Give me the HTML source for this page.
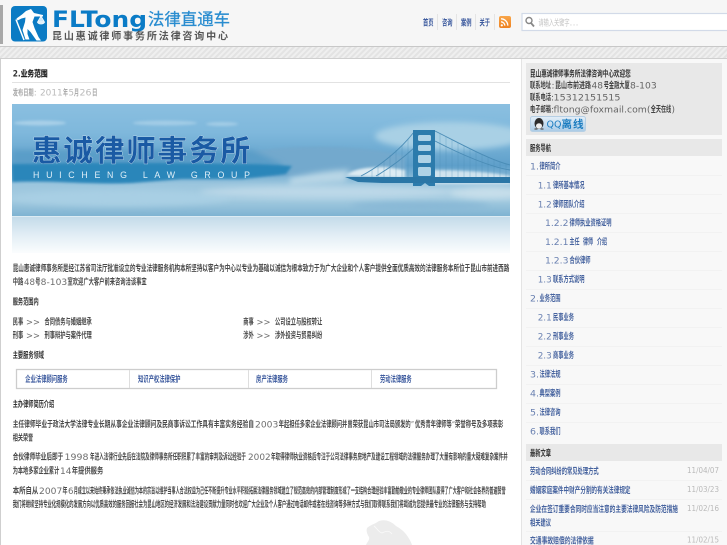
<!DOCTYPE html>
<html lang="zh-CN">
<head>
<meta charset="utf-8">
<title>FLTong 法律直通车</title>
<style>
html,body{margin:0;padding:0;background:#fff;width:727px;height:545px;overflow:hidden}
svg{display:block;position:absolute;left:0;top:0}
text{white-space:pre}
.c{font-family:"Liberation Sans","Noto Sans CJK SC",sans-serif;font-size:8.8px;font-weight:700}
.l{font-family:"DejaVu Sans","Liberation Sans",sans-serif;font-size:9px;opacity:.8}
.b{font-weight:700;opacity:1}
.r{font-weight:400}
#all{filter:blur(.3px)}
</style>
</head>
<body>
<svg id="all" width="727" height="545" viewBox="0 0 727 545" xmlns="http://www.w3.org/2000/svg">
<defs>
<pattern id="hatch" width="4" height="4" patternUnits="userSpaceOnUse" patternTransform="rotate(45)">
<rect width="4" height="4" fill="#efefef"/><rect width="2" height="4" fill="#e3e3e3"/>
</pattern>
<linearGradient id="sky" x1="0" y1="0" x2="0" y2="1">
<stop offset="0" stop-color="#8abfe0"/><stop offset=".25" stop-color="#7fb8dc"/><stop offset=".42" stop-color="#6eabd2"/><stop offset=".55" stop-color="#5e9fca"/><stop offset=".72" stop-color="#9cc6de"/><stop offset=".85" stop-color="#a4cbe0"/><stop offset="1" stop-color="#7fb3d2"/>
</linearGradient>
<linearGradient id="refl" x1="0" y1="0" x2="0" y2="1">
<stop offset="0" stop-color="#c4dcea"/><stop offset=".5" stop-color="#e2eef5"/><stop offset="1" stop-color="#fbfdfe"/>
</linearGradient>
<linearGradient id="qq" x1="0" y1="0" x2="0" y2="1">
<stop offset="0" stop-color="#e4eff8"/><stop offset="1" stop-color="#a9cbe6"/>
</linearGradient>
<linearGradient id="rss" x1="0" y1="0" x2="0" y2="1">
<stop offset="0" stop-color="#f8a64a"/><stop offset="1" stop-color="#ee8220"/>
</linearGradient>
<filter id="f3" x="-20%" y="-50%" width="140%" height="200%"><feGaussianBlur stdDeviation="3"/></filter>
<filter id="f1" x="-20%" y="-50%" width="140%" height="200%"><feGaussianBlur stdDeviation="1.2"/></filter>
<clipPath id="bc"><rect x="12" y="104" width="498" height="112"/></clipPath>
</defs>

<!-- page frame -->
<rect width="727" height="545" fill="#fff"/>
<rect width="727" height="46" fill="#f6f6f6"/>
<rect x="0" y="5" width="3" height="39" fill="#a8a8a8"/>
<rect y="46" width="727" height="1" fill="#c8c8c8"/>
<rect y="47" width="727" height="11" fill="url(#hatch)"/>
<rect y="58" width="727" height="1" fill="#cfcfcf"/>
<rect x="0" y="58" width="1" height="487" fill="#cfcfcf"/>
<rect x="521" y="59" width="206" height="486" fill="#f8f8f8"/>
<rect x="521" y="59" width="1" height="486" fill="#e4e4e4"/>

<!-- logo -->
<rect x="11" y="6" width="36" height="35.500" rx="4" fill="#0b7bc4"/>
<path d="M26 11L31 9 34 13 43 15 43 16.500 34.500 16.500 32.500 22 34.500 28 38.500 37 41 40.500 36.500 40.500 30.500 32 27.500 29 27.500 34 29.500 39.500 25.500 39.500 22.500 30 25 22 25.500 17.500 21.500 18.500 17.500 20.500 16.500 18.500 22 14.500Z" fill="#fff"/>
<path d="M16 19.500L24 40" stroke="#fff" stroke-width="1.500" fill="none"/>
<path d="M37.500 22h7l-3.500-6zM37.500 22a3.500 2 0 0 0 7 0" fill="#cfe6f5" stroke="#fff" stroke-width=".7"/>
<text x="52" y="27" class="l b" style="font-size:22px" fill="#0a7bc6" textLength="95" lengthAdjust="spacingAndGlyphs">FLTong</text>
<text x="148" y="25" class="c r" style="font-size:16.400px" fill="#2a8dd0" stroke="#2a8dd0" stroke-width=".3" textLength="82" lengthAdjust="spacingAndGlyphs">法律直通车</text>
<text x="52" y="39.500" class="c" style="font-size:10px" fill="#555" textLength="176">昆山惠诚律师事务所法律咨询中心</text>

<!-- nav -->
<g fill="#3c5a9e">
<text x="423" y="25.500" class="c" textLength="10.500" lengthAdjust="spacingAndGlyphs">首页</text>
<text x="442" y="25.500" class="c" textLength="10.500" lengthAdjust="spacingAndGlyphs">咨询</text>
<text x="461" y="25.500" class="c" textLength="10.500" lengthAdjust="spacingAndGlyphs">案例</text>
<text x="479.500" y="25.500" class="c" textLength="10.500" lengthAdjust="spacingAndGlyphs">关于</text>
</g>
<g fill="#e4e4e4">
<rect x="437" y="14" width="1" height="16"/><rect x="456" y="14" width="1" height="16"/><rect x="475" y="14" width="1" height="16"/><rect x="494" y="14" width="1" height="16"/>
</g>
<rect x="499" y="16" width="12" height="12" rx="2" fill="url(#rss)"/>
<circle cx="501.800" cy="25.300" r="1.100" fill="#fff"/>
<path d="M501 21.800a3.800 3.800 0 0 1 3.800 3.800M501 18.800a6.800 6.800 0 0 1 6.800 6.800" fill="none" stroke="#fff" stroke-width="1.300"/>
<rect x="522" y="13.500" width="210" height="17" fill="#fff" stroke="#d2dae8" stroke-width="1.200"/>
<circle cx="529" cy="20.500" r="3" fill="none" stroke="#888" stroke-width="1.400"/>
<path d="M531 23l3 3.500" stroke="#888" stroke-width="1.800"/>
<text x="538.500" y="25.500" class="c r" fill="#c4c4c4" textLength="31" lengthAdjust="spacingAndGlyphs">请输入关键字</text>
<text x="569.500" y="25.500" class="l" fill="#bdbdbd" textLength="9">...</text>

<!-- title -->
<text x="12.700" y="76.500" class="l b" fill="#333" textLength="8" lengthAdjust="spacingAndGlyphs">2.</text>
<text x="20.700" y="76.500" class="c" fill="#222" stroke="#222" stroke-width=".2" textLength="27" lengthAdjust="spacingAndGlyphs">业务范围</text>
<rect x="12" y="82" width="498" height="1" fill="#e2e2e2"/>
<g fill="#aaa">
<text x="12.700" y="95.500" class="c" textLength="21" lengthAdjust="spacingAndGlyphs">发布日期</text>
<text x="33.700" y="95.500" class="l" textLength="3">:</text>
<text x="40" y="95.500" class="l" textLength="22.700" lengthAdjust="spacingAndGlyphs">2011</text>
<text x="63" y="95.500" class="c" textLength="5" lengthAdjust="spacingAndGlyphs">年</text>
<text x="68.500" y="95.500" class="l" textLength="5.500" lengthAdjust="spacingAndGlyphs">5</text>
<text x="74" y="95.500" class="c" textLength="5" lengthAdjust="spacingAndGlyphs">月</text>
<text x="79.500" y="95.500" class="l" textLength="12" lengthAdjust="spacingAndGlyphs">26</text>
<text x="92" y="95.500" class="c" textLength="5.500" lengthAdjust="spacingAndGlyphs">日</text>
</g>

<!-- banner -->
<g clip-path="url(#bc)">
<rect x="12" y="104" width="498" height="112" fill="url(#sky)"/>
<ellipse cx="40" cy="123" rx="26" ry="2.500" fill="#a9d0e8" filter="url(#f1)"/>
<ellipse cx="165" cy="123" rx="32" ry="2.500" fill="#a2cce6" filter="url(#f1)"/>
<ellipse cx="222" cy="124" rx="16" ry="2" fill="#a2cce6" filter="url(#f1)"/>
<ellipse cx="450" cy="136" rx="75" ry="14" fill="#a9d0e5" filter="url(#f3)"/>
<path d="M250 152c30-5 60-6 85-5 25 1 45 3 70 9v20H250z" fill="#73a9cd" filter="url(#f1)"/>
<path d="M12 150h240l30 14v10H12z" fill="#5a9dc8" filter="url(#f3)"/>
<path d="M12 164c30 0 90-2 150-1 50 1 90 0 130 3l-6 8-44 5-60 0-50 4c-40 2-80-3-120-1z" fill="#2c86ba" filter="url(#f1)"/>
<path d="M345 176c5-6 20-9 40-9l20 3v8z" fill="#dcebf3" filter="url(#f1)"/>
<path d="M290 178c25-5 40-8 60-8l-5 12-55 4z" fill="#b8d6e6" filter="url(#f3)"/>
<path d="M430 170c30 0 60 2 80 6v8h-80z" fill="#cfe3ee" filter="url(#f1)"/>
<ellipse cx="120" cy="198" rx="110" ry="8" fill="#a8cfe4" filter="url(#f3)"/>
<ellipse cx="330" cy="192" rx="130" ry="6" fill="#bcd8e8" filter="url(#f3)"/>
<ellipse cx="490" cy="193" rx="40" ry="6" fill="#c6deea" filter="url(#f3)"/>
<ellipse cx="420" cy="206" rx="70" ry="4" fill="#88b8d6" filter="url(#f3)"/>

<!-- bridge -->
<g fill="none" stroke="#4a8cb6">
<path d="M414 132C400 150 380 166 361 176" stroke-width=".9"/>
<path d="M414 148C403 158 390 168 376 176" stroke-width=".9"/>
<path d="M435 131C465 146 490 160 510 165" stroke-width=".9"/>
<path d="M435 141C460 154 490 167 510 170" stroke-width=".9"/>
<path d="M372 177V170M378 177V166M384 177V161M390 177V155M396 177V150M402 177V145M408 177V139M440 177V134M446 177V137M452 177V140M458 177V143M464 177V146M470 177V149M476 177V152M482 177V155M488 177V157M494 177V160M500 177V162M506 177V164" stroke-width=".5" opacity=".6"/>
</g>
<path d="M413 130h22v56h-6l-4-3-4 3h-8z" fill="#2c7bac"/>
<g fill="#aed2e6">
<rect x="418" y="135" width="13" height="6" rx="1.500"/>
<rect x="418" y="145" width="13" height="6" rx="1.500"/>
<rect x="418" y="155" width="13" height="8" rx="1.500"/>
<rect x="418" y="167" width="13" height="9" rx="1.500"/>
</g>
<path d="M345 177l65 0h100v6H382l-24-1z" fill="#2a76a6"/>

<!-- banner text -->
<text x="32" y="161" class="c" style="font-size:29.500px" fill="#1a5aa4" stroke="#dbeaf4" stroke-width=".6" paint-order="stroke" textLength="218" lengthAdjust="spacing">惠诚律师事务所</text>
<text x="33" y="178" style="font-family:'Liberation Sans',sans-serif;font-size:8.800px" fill="#e0eff8" textLength="217" lengthAdjust="spacing">HUICHENG LAW GROUP</text>
</g>
<rect x="12" y="216" width="498" height="1" fill="#dcebf3"/>
<rect x="12" y="217" width="498" height="36" fill="url(#refl)"/>

<!-- body text -->
<g fill="#4a4a4a">
<text x="12.700" y="271" class="c" textLength="496.600" lengthAdjust="spacingAndGlyphs">昆山惠诚律师事务所是经江苏省司法厅批准设立的专业法律服务机构本所坚持以客户为中心以专业为基础以诚信为根本致力于为广大企业和个人客户提供全面优质高效的法律服务本所位于昆山市前进西路</text>
<text x="12.700" y="284.600" class="c" textLength="10.600" lengthAdjust="spacingAndGlyphs">中路</text>
<text x="24" y="285" class="l" textLength="11" lengthAdjust="spacingAndGlyphs">48</text>
<text x="35.200" y="284.600" class="c" textLength="5.200" lengthAdjust="spacingAndGlyphs">号</text>
<text x="40.700" y="285" class="l" textLength="26.500" lengthAdjust="spacingAndGlyphs">8-103</text>
<text x="67.500" y="284.600" class="c" textLength="79.200" lengthAdjust="spacingAndGlyphs">室欢迎广大客户前来咨询洽谈事宜</text>

<text x="12.700" y="304.700" class="c" fill="#333" textLength="26" lengthAdjust="spacingAndGlyphs">服务范围内</text>

<text x="12.700" y="324.700" class="c" textLength="10.500" lengthAdjust="spacingAndGlyphs">民事</text>
<text x="26" y="325" class="l" textLength="14" lengthAdjust="spacingAndGlyphs">&gt;&gt;</text>
<text x="44.500" y="324.700" class="c" textLength="47.200" lengthAdjust="spacingAndGlyphs">合同债务与婚姻继承</text>
<text x="12.700" y="338" class="c" textLength="10.500" lengthAdjust="spacingAndGlyphs">刑事</text>
<text x="26" y="338.300" class="l" textLength="14" lengthAdjust="spacingAndGlyphs">&gt;&gt;</text>
<text x="44.500" y="338" class="c" textLength="47.200" lengthAdjust="spacingAndGlyphs">刑事辩护与案件代理</text>
<text x="243.300" y="324.700" class="c" textLength="10.500" lengthAdjust="spacingAndGlyphs">商事</text>
<text x="256.500" y="325" class="l" textLength="14" lengthAdjust="spacingAndGlyphs">&gt;&gt;</text>
<text x="275" y="324.700" class="c" textLength="47.200" lengthAdjust="spacingAndGlyphs">公司设立与股权转让</text>
<text x="243.300" y="338" class="c" textLength="10.500" lengthAdjust="spacingAndGlyphs">涉外</text>
<text x="256.500" y="338.300" class="l" textLength="14" lengthAdjust="spacingAndGlyphs">&gt;&gt;</text>
<text x="275" y="338" class="c" textLength="47.200" lengthAdjust="spacingAndGlyphs">涉外投资与贸易纠纷</text>

<text x="12.700" y="358" class="c" fill="#333" textLength="31.300" lengthAdjust="spacingAndGlyphs">主要服务领域</text>
</g>

<!-- table -->
<rect x="16.500" y="369.500" width="480" height="19" fill="#fff" stroke="#cdcdcd" stroke-width="1.300"/>
<g fill="#dedede"><rect x="129" y="370" width="1" height="18"/><rect x="248" y="370" width="1" height="18"/><rect x="371" y="370" width="1" height="18"/></g>
<g fill="#3c5a9e">
<text x="25.300" y="382" class="c" textLength="42.400" lengthAdjust="spacingAndGlyphs">企业法律顾问服务</text>
<text x="138" y="382" class="c" textLength="42.400" lengthAdjust="spacingAndGlyphs">知识产权法律保护</text>
<text x="256" y="382" class="c" textLength="32" lengthAdjust="spacingAndGlyphs">房产法律服务</text>
<text x="380" y="382" class="c" textLength="31.700" lengthAdjust="spacingAndGlyphs">劳动法律服务</text>
</g>

<g fill="#4a4a4a">
<text x="12.700" y="407" class="c" fill="#333" textLength="41.500" lengthAdjust="spacingAndGlyphs">主办律师简历介绍</text>

<text x="12.700" y="427" class="c" textLength="241.300" lengthAdjust="spacingAndGlyphs">主任律师毕业于政法大学法律专业长期从事企业法律顾问及民商事诉讼工作具有丰富实务经验自</text>
<text x="255" y="427.300" class="l" textLength="23.300" lengthAdjust="spacingAndGlyphs">2003</text>
<text x="278.700" y="427" class="c" textLength="132" lengthAdjust="spacingAndGlyphs">年起担任多家企业法律顾问并曾荣获昆山市司法局颁发的</text>
<text x="411" y="427.300" class="l" textLength="3" lengthAdjust="spacingAndGlyphs">”</text>
<text x="415" y="427" class="c" textLength="36.700" lengthAdjust="spacingAndGlyphs">优秀青年律师等</text>
<text x="452" y="427.300" class="l" textLength="3" lengthAdjust="spacingAndGlyphs">“</text>
<text x="455" y="427" class="c" textLength="48.300" lengthAdjust="spacingAndGlyphs">荣誉称号及多项表彰</text>
<text x="12.700" y="440.300" class="c" textLength="20.500" lengthAdjust="spacingAndGlyphs">相关荣誉</text>

<text x="12.700" y="459.700" class="c" textLength="50.600" lengthAdjust="spacingAndGlyphs">合伙律师毕业后即于</text>
<text x="64.500" y="460" class="l" textLength="24" lengthAdjust="spacingAndGlyphs">1998</text>
<text x="90" y="459.700" class="c" textLength="156" lengthAdjust="spacingAndGlyphs">年进入法律行业先后在法院及律师事务所任职积累了丰富的审判及诉讼经验于</text>
<text x="248" y="460" class="l" textLength="22.700" lengthAdjust="spacingAndGlyphs">2002</text>
<text x="271" y="459.700" class="c" textLength="236.700" lengthAdjust="spacingAndGlyphs">年取得律师执业资格后专注于公司法律事务房地产及建设工程领域的法律服务办理了大量有影响的重大疑难复杂案件并</text>
<text x="12.700" y="473.700" class="c" textLength="46.600" lengthAdjust="spacingAndGlyphs">为本地多家企业累计</text>
<text x="60" y="474" class="l" textLength="11.500" lengthAdjust="spacingAndGlyphs">14</text>
<text x="71.700" y="473.700" class="c" textLength="31.600" lengthAdjust="spacingAndGlyphs">年提供服务</text>

<text x="12.700" y="493.700" class="c" textLength="25.600" lengthAdjust="spacingAndGlyphs">本所自从</text>
<text x="39" y="494" class="l" textLength="23.300" lengthAdjust="spacingAndGlyphs">2007</text>
<text x="62.500" y="493.700" class="c" textLength="5" lengthAdjust="spacingAndGlyphs">年</text>
<text x="68" y="494" class="l" textLength="5.500" lengthAdjust="spacingAndGlyphs">6</text>
<text x="73.700" y="493.700" class="c" textLength="432" lengthAdjust="spacingAndGlyphs">月成立以来始终秉承依法执业诚信为本的宗旨以维护当事人合法权益为己任不断提升专业水平积极拓展法律服务领域建立了规范高效的内部管理制度形成了一支结构合理经验丰富勤勉敬业的专业律师团队赢得了广大客户和社会各界的普遍赞誉</text>
<text x="12.700" y="507" class="c" textLength="473.300" lengthAdjust="spacingAndGlyphs">我们将继续坚持专业化规模化的发展方向以优质高效的服务回报社会为昆山地区的经济发展和法治建设贡献力量同时也欢迎广大企业及个人客户通过电话邮件或者在线咨询等多种方式与我们取得联系我们将竭诚为您提供最专业的法律服务与支持帮助</text>
</g>

<!-- map watermark -->
<path d="M367 528c3-3 8-4 12-7 6-2 12 0 17 5 5 3 9 6 12 11 2 3 3 5 4 8h-46c1-3 4-5 3-8-2-3-3-6-2-9z" fill="#ececec"/>
<path d="M374 526c3 2 4 6 8 7 4-2 7-3 10 1" fill="none" stroke="#fafafa" stroke-width=".8"/>

<!-- sidebar info -->
<rect x="526" y="63" width="196" height="72" fill="#e8e8e8"/>
<g fill="#444">
<text x="530" y="76.300" class="c" fill="#333" textLength="100.700" lengthAdjust="spacingAndGlyphs">昆山惠诚律师事务所法律咨询中心欢迎您</text>
<text x="530" y="88" class="c" textLength="21" lengthAdjust="spacingAndGlyphs">联系地址</text>
<text x="551.500" y="88.300" class="l" textLength="3">:</text>
<text x="555" y="88" class="c" textLength="36" lengthAdjust="spacingAndGlyphs">昆山市前进路</text>
<text x="591.500" y="88.300" class="l" textLength="11.500" lengthAdjust="spacingAndGlyphs">48</text>
<text x="603.700" y="88" class="c" textLength="26" lengthAdjust="spacingAndGlyphs">号金融大厦</text>
<text x="630" y="88.300" class="l" textLength="26.700" lengthAdjust="spacingAndGlyphs">8-103</text>
<text x="530" y="100" class="c" textLength="21" lengthAdjust="spacingAndGlyphs">联系电话</text>
<text x="551" y="100.300" class="l" textLength="3">:</text>
<text x="553.500" y="100.300" class="l" textLength="67" lengthAdjust="spacingAndGlyphs">15312151515</text>
<text x="530" y="112" class="c" textLength="21" lengthAdjust="spacingAndGlyphs">电子邮箱</text>
<text x="551" y="112.300" class="l" textLength="3">:</text>
<text x="553.500" y="112.300" class="l" textLength="97" lengthAdjust="spacingAndGlyphs">fltong@foxmail.com(</text>
<text x="650.700" y="112" class="c" textLength="20.500" lengthAdjust="spacingAndGlyphs">全天在线</text>
<text x="671.500" y="112.300" class="l" textLength="3.500" lengthAdjust="spacingAndGlyphs">)</text>
</g>
<rect x="530.500" y="116.500" width="55" height="15" rx="2" fill="url(#qq)" stroke="#b6cfe4"/>
<ellipse cx="539" cy="123.500" rx="4.500" ry="5.500" fill="#2c2c2c"/>
<ellipse cx="539" cy="126" rx="3" ry="2.800" fill="#eee"/>
<path d="M534.500 129h3M540.500 129h3" stroke="#555" stroke-width="1.200"/>
<text x="546.500" y="127.500" class="l b" style="font-size:10px;font-weight:400" fill="#1a7cc0" textLength="15" lengthAdjust="spacingAndGlyphs">QQ</text>
<text x="561.500" y="127.500" class="c" style="font-size:10.500px" fill="#1a7cc0" textLength="22">离线</text>

<!-- sidebar headings -->
<rect x="526" y="139" width="196" height="17" fill="#e8e8e8"/>
<text x="530" y="151" class="c" fill="#333" textLength="21" lengthAdjust="spacingAndGlyphs">服务导航</text>
<rect x="526" y="444" width="196" height="17" fill="#e8e8e8"/>
<text x="530" y="456" class="c" fill="#333" textLength="21" lengthAdjust="spacingAndGlyphs">最新文章</text>

<!-- nav separators -->
<g fill="#f2f2f2">
<rect x="526" y="175" width="196" height="1"/><rect x="526" y="194" width="196" height="1"/><rect x="526" y="213" width="196" height="1"/><rect x="526" y="232" width="196" height="1"/><rect x="526" y="251" width="196" height="1"/><rect x="526" y="270" width="196" height="1"/><rect x="526" y="289" width="196" height="1"/><rect x="526" y="308" width="196" height="1"/><rect x="526" y="327" width="196" height="1"/><rect x="526" y="346" width="196" height="1"/><rect x="526" y="365" width="196" height="1"/><rect x="526" y="384" width="196" height="1"/><rect x="526" y="403" width="196" height="1"/><rect x="526" y="422" width="196" height="1"/><rect x="526" y="480" width="196" height="1"/><rect x="526" y="499" width="196" height="1"/><rect x="526" y="531" width="196" height="1"/>
</g>

<!-- tree -->
<g fill="#46639f">
<text x="530" y="169.300" class="l" textLength="9" lengthAdjust="spacingAndGlyphs">1.</text><text x="539.500" y="169" class="c" textLength="21" lengthAdjust="spacingAndGlyphs">律所简介</text>
<text x="537.700" y="188.300" class="l" textLength="14" lengthAdjust="spacingAndGlyphs">1.1</text><text x="553" y="188" class="c" textLength="31.500" lengthAdjust="spacingAndGlyphs">律所基本情况</text>
<text x="537.700" y="207.300" class="l" textLength="14" lengthAdjust="spacingAndGlyphs">1.2</text><text x="553" y="207" class="c" textLength="31.500" lengthAdjust="spacingAndGlyphs">律师团队介绍</text>
<text x="545" y="226" class="l" textLength="23.500" lengthAdjust="spacingAndGlyphs">1.2.2</text><text x="569.500" y="225.700" class="c" textLength="42" lengthAdjust="spacingAndGlyphs">律师执业资格证明</text>
<text x="545" y="244.800" class="l" textLength="23.500" lengthAdjust="spacingAndGlyphs">1.2.1</text><text x="569.500" y="244.500" class="c" textLength="10" lengthAdjust="spacingAndGlyphs">主任</text><text x="583" y="244.500" class="c" textLength="10" lengthAdjust="spacingAndGlyphs">律师</text><text x="597" y="244.500" class="c" textLength="10" lengthAdjust="spacingAndGlyphs">介绍</text>
<text x="545" y="263.300" class="l" textLength="23.500" lengthAdjust="spacingAndGlyphs">1.2.3</text><text x="569.500" y="263" class="c" textLength="21" lengthAdjust="spacingAndGlyphs">合伙律师</text>
<text x="537.700" y="282.300" class="l" textLength="14" lengthAdjust="spacingAndGlyphs">1.3</text><text x="553" y="282" class="c" textLength="31.500" lengthAdjust="spacingAndGlyphs">联系方式说明</text>
<text x="530" y="301.300" class="l" textLength="9" lengthAdjust="spacingAndGlyphs">2.</text><text x="539.500" y="301" class="c" textLength="21" lengthAdjust="spacingAndGlyphs">业务范围</text>
<text x="537.700" y="320.300" class="l" textLength="14" lengthAdjust="spacingAndGlyphs">2.1</text><text x="553" y="320" class="c" textLength="21" lengthAdjust="spacingAndGlyphs">民事业务</text>
<text x="537.700" y="339.300" class="l" textLength="14" lengthAdjust="spacingAndGlyphs">2.2</text><text x="553" y="339" class="c" textLength="21" lengthAdjust="spacingAndGlyphs">刑事业务</text>
<text x="537.700" y="358.300" class="l" textLength="14" lengthAdjust="spacingAndGlyphs">2.3</text><text x="553" y="358" class="c" textLength="21" lengthAdjust="spacingAndGlyphs">商事业务</text>
<text x="530" y="377.300" class="l" textLength="9" lengthAdjust="spacingAndGlyphs">3.</text><text x="539.500" y="377" class="c" textLength="21" lengthAdjust="spacingAndGlyphs">法律法规</text>
<text x="530" y="396.300" class="l" textLength="9" lengthAdjust="spacingAndGlyphs">4.</text><text x="539.500" y="396" class="c" textLength="21" lengthAdjust="spacingAndGlyphs">典型案例</text>
<text x="530" y="415.300" class="l" textLength="9" lengthAdjust="spacingAndGlyphs">5.</text><text x="539.500" y="415" class="c" textLength="21" lengthAdjust="spacingAndGlyphs">法律咨询</text>
<text x="530" y="434.300" class="l" textLength="9" lengthAdjust="spacingAndGlyphs">6.</text><text x="539.500" y="434" class="c" textLength="21" lengthAdjust="spacingAndGlyphs">联系我们</text>

<text x="530" y="474" class="c" textLength="68.700" lengthAdjust="spacingAndGlyphs">劳动合同纠纷的常见处理方式</text>
<text x="530" y="493" class="c" textLength="100.500" lengthAdjust="spacingAndGlyphs">婚姻家庭案件中财产分割的有关法律规定</text>
<text x="530" y="512" class="c" textLength="148" lengthAdjust="spacingAndGlyphs">企业在签订重要合同时应当注意的主要法律风险及防范措施</text>
<text x="530" y="525.500" class="c" textLength="21" lengthAdjust="spacingAndGlyphs">相关建议</text>
<text x="530" y="543.500" class="c" textLength="63.700" lengthAdjust="spacingAndGlyphs">交通事故赔偿的法律依据</text>
</g>
<g fill="#aaa">
<text x="687" y="473" class="l" style="font-size:8px" textLength="32" lengthAdjust="spacingAndGlyphs">11/04/07</text>
<text x="687" y="492" class="l" style="font-size:8px" textLength="32" lengthAdjust="spacingAndGlyphs">11/03/23</text>
<text x="687" y="511" class="l" style="font-size:8px" textLength="32" lengthAdjust="spacingAndGlyphs">11/02/16</text>
<text x="687" y="542.500" class="l" style="font-size:8px" textLength="32" lengthAdjust="spacingAndGlyphs">11/02/15</text>
</g>
</svg>
</body>
</html>
